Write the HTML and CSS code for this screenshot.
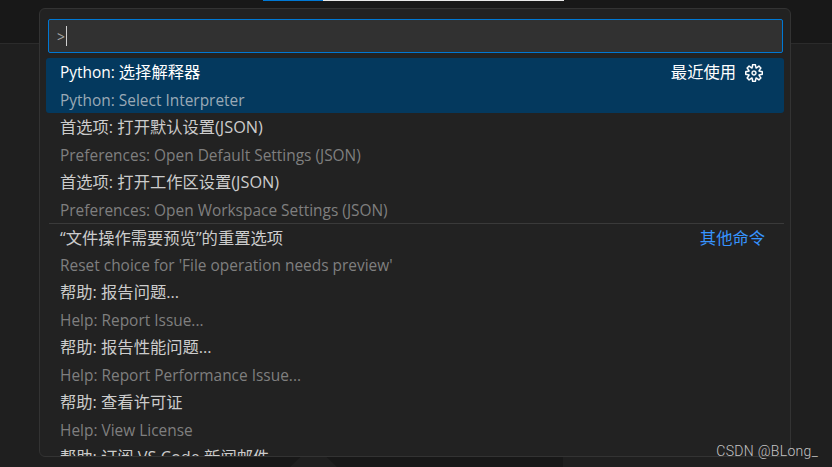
FILE: index.html
```html
<!DOCTYPE html>
<html lang="zh">
<head>
<meta charset="utf-8">
<title>Command Palette</title>
<link rel="stylesheet" href="styles.css">
</head>
<body>
<div class="workbench">
  <div class="titlebar"><span class="tab-blue"></span><span class="tab-white"></span></div>
  <div class="editor"><div class="editor-strip"><span class="peak"></span></div></div>
</div>
<div class="palette">
  <div class="input"><span class="prompt">&gt;</span><span class="caret"></span></div>
  <div class="list">
    <div class="item selected">
      <div class="row"><span class="label"><span class="latin">Python: </span>选择解释器</span><span class="meta">最近使用</span>
        <svg class="gear" viewBox="0 0 24 24" width="18" height="18" fill="#fff" stroke="#fff" stroke-width="0.3"><path fill-rule="evenodd" d="M19.85 8.75l4.15.83v4.84l-4.15.83 2.35 3.52-3.43 3.43-3.52-2.35-.83 4.15H9.58l-.83-4.15-3.52 2.35-3.43-3.43 2.35-3.52L0 14.42V9.58l4.15-.83L1.8 5.23 5.23 1.8l3.52 2.35L9.58 0h4.84l.83 4.15 3.52-2.35 3.43 3.43-2.35 3.52zm-1.57 5.07l4-.81v-2l-4-.81-.54-1.3 2.29-3.43-1.43-1.43-3.43 2.29-1.3-.54-.81-4h-2l-.81 4-1.3.54-3.43-2.29-1.43 1.43L6.38 8.9l-.54 1.3-4 .81v2l4 .81.54 1.3-2.29 3.43 1.43 1.43 3.43-2.29 1.3.54.81 4h2l.81-4 1.3-.54 3.43 2.29 1.43-1.43-2.29-3.43.54-1.3zm-8.186-4.672A3.43 3.43 0 0 1 12 8.57 3.44 3.44 0 0 1 15.43 12a3.43 3.43 0 1 1-5.336-2.852zm.956 4.274c.281.188.612.288.95.288A1.7 1.7 0 0 0 13.71 12a1.71 1.71 0 1 0-2.66 1.422z"/></svg>
      </div>
      <div class="detail">Python: Select Interpreter</div>
    </div>
    <div class="item"><div class="row"><span class="label">首选项: 打开默认设置(JSON)</span></div><div class="detail">Preferences: Open Default Settings (JSON)</div></div>
    <div class="item"><div class="row"><span class="label">首选项: 打开工作区设置(JSON)</span></div><div class="detail">Preferences: Open Workspace Settings (JSON)</div></div>
    <div class="item separated"><div class="row"><span class="label">“文件操作需要预览”的重置选项</span><span class="group">其他命令</span></div><div class="detail">Reset choice for 'File operation needs preview'</div></div>
    <div class="item"><div class="row"><span class="label">帮助: 报告问题...</span></div><div class="detail">Help: Report Issue...</div></div>
    <div class="item"><div class="row"><span class="label">帮助: 报告性能问题...</span></div><div class="detail">Help: Report Performance Issue...</div></div>
    <div class="item"><div class="row"><span class="label">帮助: 查看许可证</span></div><div class="detail">Help: View License</div></div>
    <div class="item"><div class="row"><span class="label">帮助: 订阅 VS Code 新闻邮件</span></div></div>
  </div>
</div>
<div class="watermark">CSDN @BLong_</div>
</body>
</html>
```
FILE: styles.css
```css
* { box-sizing: border-box; }
html, body { margin: 0; height: 100%; overflow: hidden; }
body { background: #1f1f1f; font-family: "Open Sans", "Noto Sans CJK SC", sans-serif; font-size: 16.3px; }
.workbench { height: 467px; display: flex; flex-direction: column; }
.titlebar { height: 44px; background: #181818; border-bottom: 1px solid #2b2b2b; display: flex; padding-left: 263px; align-items: flex-start; flex: none; }
.tab-blue { width: 60px; height: 1px; background: #0078d4; }
.tab-white { width: 241px; height: 1px; background: #e8e8e8; }
.editor { flex: 1; display: flex; flex-direction: column; justify-content: flex-end; padding-left: 210px; }
.editor-strip { width: 353px; height: 10px; background: #181818; position: relative; }
.peak { position: absolute; left: 80px; top: 0; width: 47px; height: 10px; background: #1f1f1f; clip-path: polygon(22% 0, 78% 0, 100% 100%, 0 100%); }
.palette { position: absolute; left: 39px; top: 8px; width: 752px; height: 449px; background: #222222; border: 1px solid #333333; border-radius: 6px; overflow: hidden; padding: 10px 6px 0; }
.input { height: 34px; margin: 0 1px 0 2px; background: #313131; border: 1px solid #0078d4; border-radius: 2px; display: flex; align-items: center; padding-left: 8px; color: #a8a8a8; font-size: 14px; }
.caret { width: 1px; height: 20px; background: #d0d0d0; margin-left: 1px; }
.list { margin-top: 5px; display: flex; flex-direction: column; }
.item { padding: 0 19px 0 14px; border-radius: 3px; }
.selected { background: #04395e; padding-right: 21px; }
.row, .detail { height: 27.5px; padding-top: 2px; line-height: 25.5px; white-space: nowrap; }
.row { display: flex; align-items: center; color: #cccccc; }
.label { flex: 1; }
.latin { font-size: 15.45px; }
.detail { color: #7f7f7f; font-size: 15.45px; }
.selected .row { color: #ffffff; }
.selected .detail { color: #9aa9b6; }
.meta { color: #ffffff; }
.gear { margin-left: 9px; flex: none; }
.separated { position: relative; }
.separated::before { content: ""; position: absolute; left: 3px; right: 0; top: 0; height: 1px; background: #3a3a3a; }
.separated .row { padding-top: 4px; line-height: 23.5px; }
.group { color: #3794ff; }
.watermark { position: absolute; right: 14px; top: 442px; font-family: Roboto, sans-serif; font-size: 14px; font-weight: 300; letter-spacing: 0.3px; color: #c4c4c4; line-height: 18px; }
```
